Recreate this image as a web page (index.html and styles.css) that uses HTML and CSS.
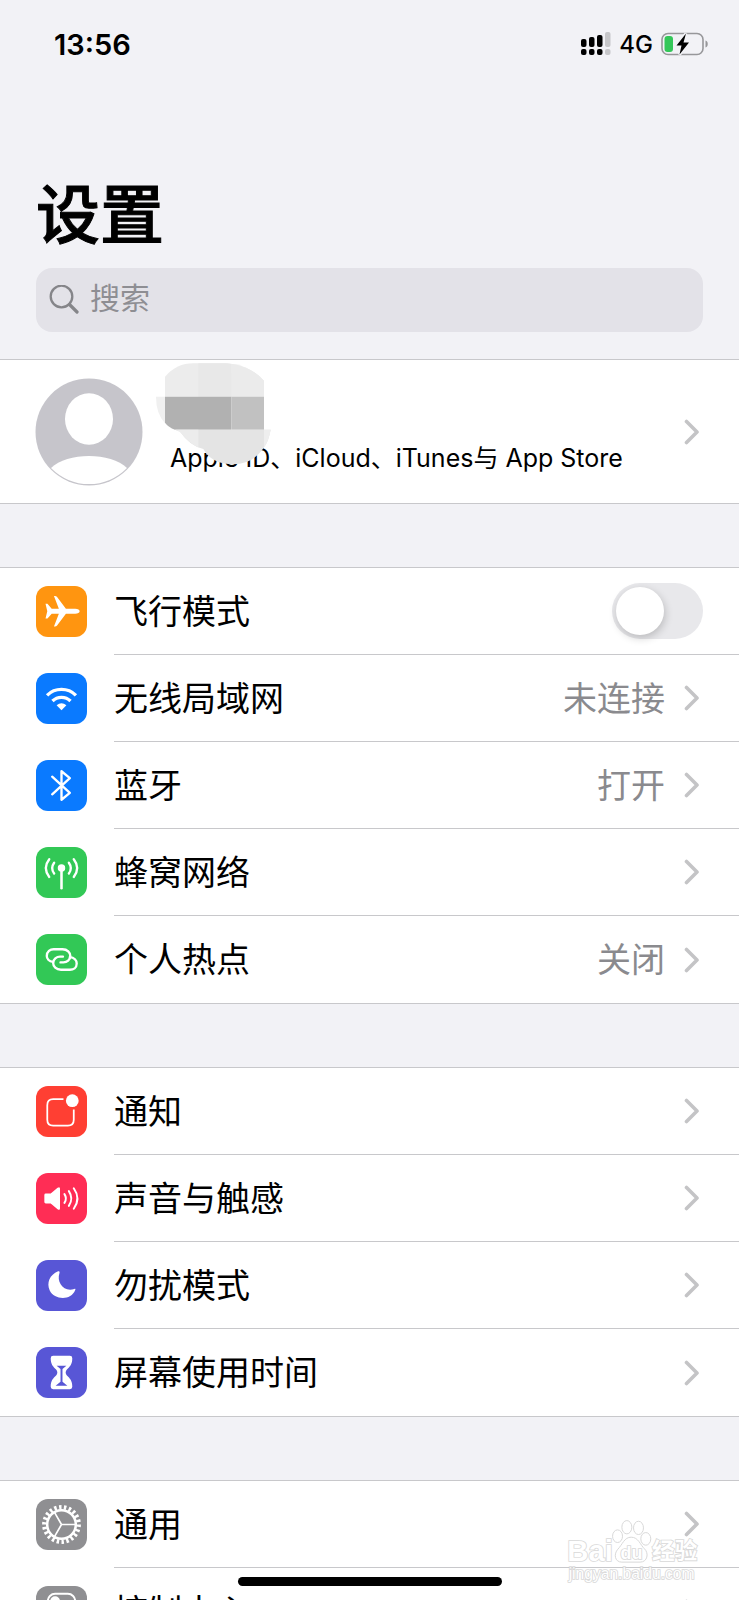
FILE: index.html
```html
<!DOCTYPE html>
<html lang="zh-CN">
<head>
    <meta charset="UTF-8">
    <meta name="viewport" content="width=device-width, initial-scale=1.0">
    <title>设置</title>
    <link rel="stylesheet" href="styles.css">
</head>
<body>

<svg class="sprite" aria-hidden="true">
    <symbol id="chevron" viewBox="0 0 16 26">
        <path d="M2.5 2.5 13 13 2.5 23.5" fill="none" stroke="#c4c4c6" stroke-width="3.6" stroke-linecap="round" stroke-linejoin="round"/>
    </symbol>
</svg>

<div class="screen">
    <div class="status-bar">
        <span class="time">13:56</span>
        <div class="status-icons">
            <svg class="signal" viewBox="0 0 30 24" aria-hidden="true">
                <g fill="#000">
                    <rect x="0" y="7" width="5.5" height="8" rx="2"/>
                    <rect x="8" y="5" width="5.5" height="10" rx="2"/>
                    <rect x="16" y="3" width="5.5" height="12" rx="2"/>
                    <rect x="0" y="17" width="5.5" height="6" rx="2"/>
                    <rect x="8" y="17" width="5.5" height="6" rx="2"/>
                    <rect x="16" y="17" width="5.5" height="6" rx="2"/>
                </g>
                <g fill="#c6c6c9">
                    <rect x="24" y="0" width="5.5" height="15" rx="2"/>
                    <rect x="24" y="17" width="5.5" height="6" rx="2"/>
                </g>
            </svg>
            <span class="network">4G</span>
            <svg class="battery" viewBox="0 0 48 24" aria-hidden="true">
                <rect x="1" y="1.5" width="41" height="21" rx="6" fill="none" stroke="#97979a" stroke-width="1.6"/>
                <path d="M44.5 8.5c3 .8 3 6.2 0 7z" fill="#97979a"/>
                <rect x="3.5" y="4" width="8.5" height="16" rx="3" fill="#34c759"/>
                <path d="M25 1.5 15.5 13.5h5L18.5 22.5 28 10.5h-5.5z" fill="#000" stroke="#f2f2f6" stroke-width="3" paint-order="stroke"/>
            </svg>
        </div>
    </div>

    <header class="header">
        <h1>设置</h1>
        <label class="search">
            <svg viewBox="0 0 30 30" aria-hidden="true">
                <circle cx="12.5" cy="11.5" r="10.8" fill="none" stroke="#858589" stroke-width="2.3"/>
                <path d="M20.5 19.5 28 27" stroke="#858589" stroke-width="3.2" stroke-linecap="round"/>
            </svg>
            <input type="search" placeholder="搜索" aria-label="搜索">
        </label>
    </header>

    <main>
        <section class="group">
            <a class="profile" href="#">
                <svg class="avatar" viewBox="0 0 108 108" aria-hidden="true">
                    <circle cx="54" cy="54" r="53.5" fill="#c6c5cb"/>
                    <ellipse cx="54" cy="41" rx="24" ry="25.7" fill="#fff"/>
                    <path d="M16 90C32 74 76 74 92 90A53 53 0 0 1 16 90z" fill="#fff"/>
                </svg>
                <span class="profile-text">Apple ID、iCloud、iTunes与 App Store</span>
                <svg class="chevron"><use href="#chevron"/></svg>
                <!-- замазанное имя -->
                <svg class="mosaic" viewBox="459 30 360 330" aria-hidden="true">
                    <path d="M495 80Q530 40 580 40H680Q750 45 792 92V140H495z" fill="#ececec"/>
                    <path d="M595 40H680L694 42V140H595z" fill="#e8e8e8"/>
                    <path d="M694 42Q755 50 792 92V140H694z" fill="#ebebeb"/>
                    <path d="M495 140H468Q468 190 495 220z" fill="#f0f0f0"/>
                    <path d="M495 140H694V239H525Q505 232 495 218z" fill="#b1b1b1"/>
                    <path d="M694 140H792V239H694z" fill="#c1c1c1"/>
                    <path d="M525 239H812Q806 275 788 298Q755 343 700 343Q635 343 610 297Q570 288 540 245z" fill="#e4e4e4"/>
                    <path d="M525 239H595V292Q565 278 540 245z" fill="#ececec"/>
                    <path d="M792 239H812Q806 275 792 292z" fill="#eee"/>
                </svg>
            </a>
        </section>

        <section class="group">
            <label class="row">
                <svg class="icon orange" viewBox="0 0 52 52" aria-hidden="true">
                    <path fill="#fff" d="M44.5 25.7c0-1.5-1.8-2.5-4.5-2.5h-9.5L21.5 11.2q-.8-1-2.2-1h-1l5 13h-7.3l-4.3-5h-2l1.8 7.5-1.8 7.5h2l4.3-5h7.3l-5 13h1q1.4 0 2.2-1l9-12H40c2.7 0 4.5-1 4.5-2.5z"/>
                </svg>
                <span class="row-body">
                    <span class="name">飞行模式</span>
                    <input class="switch" type="checkbox" role="switch">
                </span>
            </label>
            <a class="row" href="#">
                <svg class="icon blue" viewBox="0 0 52 52" aria-hidden="true">
                    <g fill="none" stroke="#fff" stroke-width="3.4">
                        <path d="M11.3 22.8a20.8 20.8 0 0 1 29.4 0"/>
                        <path d="M16.8 28.6a13 13 0 0 1 18.4 0"/>
                    </g>
                    <path d="M26 38 21 32.8q5-4 10 0z" fill="#fff"/>
                </svg>
                <span class="row-body">
                    <span class="name">无线局域网</span>
                    <span class="value">未连接</span>
                    <svg class="chevron"><use href="#chevron"/></svg>
                </span>
            </a>
            <a class="row" href="#">
                <svg class="icon blue" viewBox="0 0 52 52" aria-hidden="true">
                    <path d="M16.5 17 34.5 33.5 26 40.5V11.5L34.5 18.5 16.5 35" fill="none" stroke="#fff" stroke-width="2.4" stroke-linejoin="round" stroke-linecap="round"/>
                </svg>
                <span class="row-body">
                    <span class="name">蓝牙</span>
                    <span class="value">打开</span>
                    <svg class="chevron"><use href="#chevron"/></svg>
                </span>
            </a>
            <a class="row" href="#">
                <svg class="icon green" viewBox="0 0 52 52" aria-hidden="true">
                    <circle cx="26" cy="21.5" r="3.8" fill="#fff"/>
                    <g fill="none" stroke="#fff" stroke-width="2.4" stroke-linecap="round">
                        <path d="M26 23V42" stroke-width="2.6"/>
                        <path d="M18.5 16q-4 5.5 0 11M13.5 12.5q-7 9 0 18M33.5 16q4 5.5 0 11M38.5 12.5q7 9 0 18"/>
                    </g>
                </svg>
                <span class="row-body">
                    <span class="name">蜂窝网络</span>
                    <svg class="chevron"><use href="#chevron"/></svg>
                </span>
            </a>
            <a class="row" href="#">
                <svg class="icon green" viewBox="0 0 52 52" aria-hidden="true">
                    <g fill="none" stroke="#fff" stroke-width="2.4" stroke-linecap="round">
                        <path d="M17.5 28.5C13 28 11 25 11 22.5C11 18 14.5 15.5 18 15.5H27C32 15.5 35 19 35 22.5C35 26.5 31.5 29 28 29H25"/>
                        <path d="M34.5 23.5C39 24 41.5 27 41.5 30C41.5 34.5 38 36.5 34.5 36.5H25.5C20.5 36.5 17.5 33 17.5 29.5C17.5 25.5 21 23 24.5 23H27.5"/>
                    </g>
                </svg>
                <span class="row-body">
                    <span class="name">个人热点</span>
                    <span class="value">关闭</span>
                    <svg class="chevron"><use href="#chevron"/></svg>
                </span>
            </a>
        </section>

        <section class="group">
            <a class="row" href="#">
                <svg class="icon red" viewBox="0 0 52 52" aria-hidden="true">
                    <path d="M28 13.5H17.5Q11.5 13.5 11.5 19.5V34.5Q11.5 40.5 17.5 40.5H32.5Q38.5 40.5 38.5 34.5V24" fill="none" stroke="#fff" stroke-width="1.8"/>
                    <circle cx="37" cy="15" r="6.5" fill="#fff"/>
                </svg>
                <span class="row-body">
                    <span class="name">通知</span>
                    <svg class="chevron"><use href="#chevron"/></svg>
                </span>
            </a>
            <a class="row" href="#">
                <svg class="icon pink" viewBox="0 0 52 52" aria-hidden="true">
                    <path d="M8.5 22.5q0-1.5 1.5-1.5h5l7-6q2.5-1.5 2.5 1v20q0 2.500-2.500 1l-7-6h-5q-1.500 0-1.500-1.500z" fill="#fff"/>
                    <g fill="none" stroke="#fff" stroke-width="2" stroke-linecap="round">
                        <path d="M29 21.5q3 4.5 0 9M33.5 18.5q5 7.5 0 15M38.5 15.5q7.5 10.5 0 21"/>
                    </g>
                </svg>
                <span class="row-body">
                    <span class="name">声音与触感</span>
                    <svg class="chevron"><use href="#chevron"/></svg>
                </span>
            </a>
            <a class="row" href="#">
                <svg class="icon purple" viewBox="0 0 52 52" aria-hidden="true">
                    <path d="M22.5 11.5C14 15 10.5 23.5 14 31C18.5 40.5 35.5 42 40 30.5C40.5 29.5 40 29 39 29.5C28.5 33 20.5 23 24 13C24.3 11.8 23.5 11 22.5 11.5z" fill="#fff"/>
                </svg>
                <span class="row-body">
                    <span class="name">勿扰模式</span>
                    <svg class="chevron"><use href="#chevron"/></svg>
                </span>
            </a>
            <a class="row" href="#">
                <svg class="icon purple" viewBox="0 0 52 52" aria-hidden="true">
                    <path d="M17.5 9h17q2.5 0 2.5 2.5c0 6.5-2.5 8.5-5.5 11.5q-2.5 3 0 6C34.5 32 37 34 37 40.5q0 2.5-2.5 2.5h-17Q15 43 15 40.5C15 34 17.5 32 20.5 29q2.5-3 0-6C17.5 20 15 18 15 11.5Q15 9 17.5 9z" fill="#fff"/>
                    <path d="M21 19h10l-4 3.500v13l5 4H20l5-4v-13z" fill="#5856d6"/>
                </svg>
                <span class="row-body">
                    <span class="name">屏幕使用时间</span>
                    <svg class="chevron"><use href="#chevron"/></svg>
                </span>
            </a>
        </section>

        <section class="group">
            <a class="row" href="#">
                <svg class="icon gray" viewBox="0 0 52 52" aria-hidden="true">
                    <g fill="none" stroke="#fff">
                        <circle cx="26" cy="26" r="17.6" stroke-width="4.4" pathLength="88" stroke-dasharray="2 2"/>
                        <circle cx="26" cy="26" r="14.6" stroke-width="2.6"/>
                        <path d="M26 26H40M26 26 19 13.9M26 26 19 38.1" stroke-width="1.7"/>
                    </g>
                </svg>
                <span class="row-body">
                    <span class="name">通用</span>
                    <svg class="chevron"><use href="#chevron"/></svg>
                </span>
            </a>
            <a class="row" href="#">
                <svg class="icon gray" viewBox="0 0 52 52" aria-hidden="true">
                    <g fill="none" stroke="#fff" stroke-width="2">
                        <rect x="12" y="8" width="28" height="15" rx="7.5"/>
                        <rect x="12" y="29" width="28" height="15" rx="7.5"/>
                    </g>
                    <circle cx="19.5" cy="15.5" r="5" fill="#fff"/>
                    <circle cx="32.5" cy="36.5" r="5" fill="#fff"/>
                </svg>
                <span class="row-body">
                    <span class="name">控制中心</span>
                    <svg class="chevron"><use href="#chevron"/></svg>
                </span>
            </a>
        </section>
    </main>

    <svg class="watermark" viewBox="200 145 400 200" aria-hidden="true">
        <g fill="#fff" stroke="#d0d0d0" stroke-width="3">
            <ellipse cx="352" cy="199" rx="15" ry="19"/>
            <ellipse cx="380" cy="172" rx="15" ry="20"/>
            <ellipse cx="415" cy="174" rx="15" ry="20"/>
            <ellipse cx="437" cy="207" rx="15" ry="19"/>
            <path d="M393 202C415 202 420 225 433 237C447 250 442 277 420 277H365C343 277 340 252 353 238C367 224 372 202 393 202z"/>
            <g paint-order="stroke" stroke-width="5">
                <text class="wm-bold" x="201" y="274" font-size="88">Bai</text>
                <text class="wm-bold" x="361" y="267" font-size="54">du</text>
                <text class="wm-cjk" x="456" y="269" font-size="68">经验</text>
                <text class="wm-url" x="205" y="328" font-size="47">jingyan.baidu.com</text>
            </g>
        </g>
    </svg>
    <div class="home-indicator"></div>
</div>

</body>
</html>
```
FILE: styles.css
```css
* {
    box-sizing: border-box;
}

body {
    margin: 0;
    background: #f2f2f6;
    color: #000;
    font-family: Inter, "Noto Sans CJK SC", sans-serif;
}

.sprite {
    display: none;
}

.screen {
    position: relative;
    height: 100vh;
    overflow: hidden;
}

.status-bar {
    display: flex;
    justify-content: space-between;
    align-items: center;
    height: 88px;
    padding: 0 30px 0 54px;
}

.time {
    font-size: 29px;
    font-weight: 600;
}

.status-icons {
    display: flex;
    align-items: center;
    gap: 8px;
}

.signal {
    width: 30px;
    height: 24px;
}

.network {
    font-size: 24px;
    font-weight: 500;
}

.battery {
    width: 48px;
    height: 24px;
}

.header {
    padding: 89px 36px 27px;
}

h1 {
    margin: 0 0 15px;
    font-size: 64px;
    font-weight: 500;
    line-height: 76px;
    -webkit-text-stroke: 1px #000;
}

.search {
    display: flex;
    align-items: center;
    gap: 11px;
    height: 64px;
    padding: 0 13px;
    border-radius: 16px;
    background: #e3e2e8;
}

.search svg {
    flex: none;
    width: 30px;
    height: 30px;
}

.search input {
    flex: 1;
    min-width: 0;
    padding: 0 0 4px;
    border: 0;
    outline: none;
    background: none;
    font: 30px Inter, "Noto Sans CJK SC", sans-serif;
}

.search input::placeholder {
    color: #8e8e93;
    opacity: 1;
}

/* Группы настроек */
.group {
    margin-bottom: 63px;
    border-top: 1px solid #c8c8cb;
    border-bottom: 1px solid #c8c8cb;
    background: #fff;
}

.profile {
    position: relative;
    display: flex;
    align-items: center;
    height: 143px;
    padding: 0 39px 0 35px;
    color: #000;
    text-decoration: none;
}

.avatar {
    flex: none;
    width: 108px;
    height: 108px;
    margin-right: 27px;
}

.profile-text {
    flex: 1;
    padding-top: 53px;
    font-size: 25px;
    line-height: 36px;
    white-space: nowrap;
}

.mosaic {
    position: absolute;
    top: 0;
    left: 153px;
    width: 120px;
    height: 110px;
}

.row {
    display: flex;
    align-items: center;
    height: 87px;
    padding-left: 36px;
    color: #000;
    text-decoration: none;
}

.icon {
    flex: none;
    width: 51px;
    height: 51px;
    margin-right: 27px;
    border-radius: 12px;
}

.orange { background: #ff9510; }
.blue { background: #0a7aff; }
.green { background: #32c856; }
.red { background: #ff3f33; }
.pink { background: #ff2d55; }
.purple { background: #5856d6; }
.gray { background: #8f8f92; }

.row-body {
    flex: 1;
    display: flex;
    align-items: center;
    height: 100%;
    padding-right: 39px;
    border-bottom: 1px solid #c8c8cb;
}

.row:last-child .row-body {
    border-bottom: 0;
}

.name,
.value {
    padding-bottom: 4px;
    font-size: 34px;
}

.name {
    flex: 1;
}

.value {
    margin-right: 19px;
    color: #8a8a8e;
}

.chevron {
    flex: none;
    width: 16px;
    height: 26px;
}

.switch {
    appearance: none;
    display: flex;
    align-items: center;
    width: 91px;
    height: 56px;
    margin: 0 -3px 0 0;
    padding: 0 4px;
    border-radius: 28px;
    background: #e8e8eb;
}

.switch::before {
    content: "";
    width: 48px;
    height: 48px;
    border-radius: 50%;
    background: #fff;
    box-shadow: 1px 3px 8px rgba(0, 0, 0, 0.2);
}

.switch:checked {
    justify-content: flex-end;
    background: #34c759;
}

.watermark {
    position: absolute;
    right: 39px;
    bottom: 15px;
    width: 133px;
    height: 67px;
    opacity: 0.8;
    pointer-events: none;
}

.wm-bold {
    font-family: "Liberation Sans", sans-serif;
    font-weight: 700;
}

.wm-cjk {
    font-family: "Noto Sans CJK SC", sans-serif;
    font-weight: 700;
}

.wm-url {
    font-family: "Liberation Sans", sans-serif;
}

.home-indicator {
    position: absolute;
    bottom: 14px;
    left: 50%;
    width: 264px;
    height: 9px;
    border-radius: 5px;
    background: #000;
    transform: translateX(-50%);
}
```
